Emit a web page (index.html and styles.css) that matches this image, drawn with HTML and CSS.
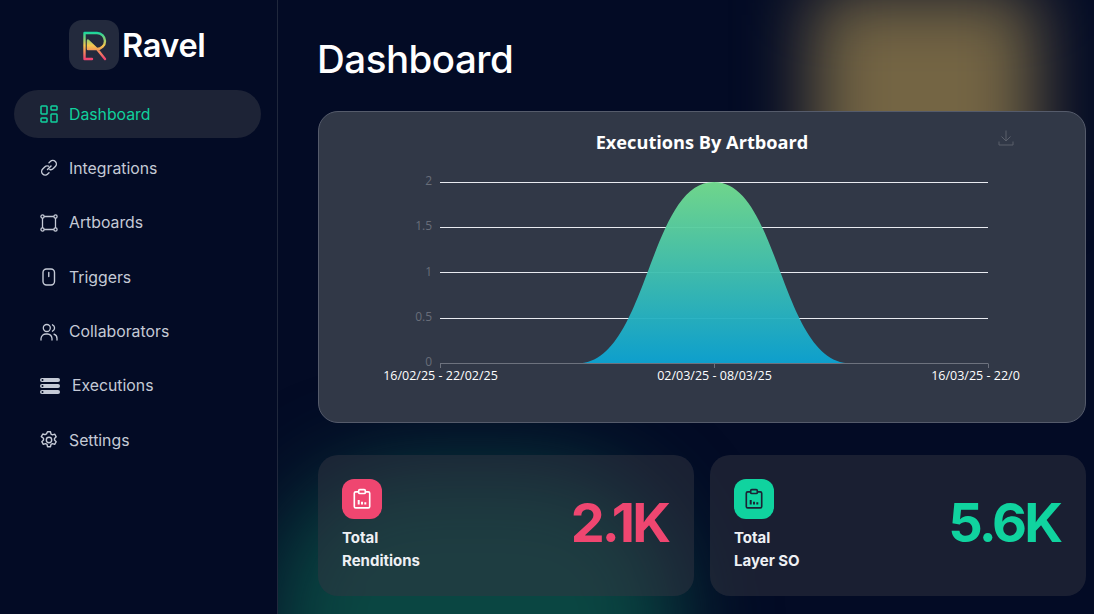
FILE: index.html
```html
<!DOCTYPE html>
<html lang="en">
<head>
<meta charset="utf-8">
<title>Ravel Dashboard</title>
<link rel="stylesheet" href="styles.css">
</head>
<body>
<div class="app">
  <aside class="sidebar">
    <div class="brand">
      <span class="logo">
        <svg width="34" height="34" viewBox="0 0 34 34" fill="none">
          <defs>
            <linearGradient id="lg" gradientUnits="userSpaceOnUse" x1="0" y1="4" x2="0" y2="31">
              <stop offset="0" stop-color="#12d6a0"/><stop offset=".5" stop-color="#f5c74e"/><stop offset="1" stop-color="#ef4370"/>
            </linearGradient>
          </defs>
          <path d="M11 12.500V21h9z" fill="url(#lg)"/>
          <path d="M15 31H7.500V5H20a8 8 0 0 1 0 16H11V12.500l9 8.500 8 10" stroke="url(#lg)" stroke-width="2.400" stroke-linecap="round" stroke-linejoin="round"/>
        </svg>
      </span>
      <span class="brand-name">Ravel</span>
    </div>
    <nav class="nav">
      <a class="nav-item active">
        <svg class="ico" viewBox="0 0 18 18" fill="none" stroke="currentColor" stroke-width="1.500"><rect x="1" y="1" width="6" height="8" rx=".8"/><rect x="11" y="1" width="6" height="4" rx=".8"/><rect x="1" y="13" width="6" height="4" rx=".8"/><rect x="11" y="9" width="6" height="8" rx=".8"/></svg>
        <span>Dashboard</span>
      </a>
      <a class="nav-item">
        <svg class="ico" viewBox="0 0 18 18" fill="none" stroke="currentColor" stroke-width="1.400" stroke-linecap="round"><path d="M7.500 10.500l3.500-3.500"/><path d="M9 3.800l1.300-1.200a3.500 3.500 0 0 1 5 5l-2 2a3.500 3.500 0 0 1-3.500.9"/><path d="M8.500 7.200a3.500 3.500 0 0 0-3.800.8l-2 2a3.500 3.500 0 0 0 5 5l1.300-1.200"/></svg>
        <span>Integrations</span>
      </a>
      <a class="nav-item">
        <svg class="ico" viewBox="0 0 18 18" fill="none" stroke="currentColor" stroke-width="1.300"><circle cx="2.500" cy="2.500" r="1.600"/><circle cx="15.500" cy="2.500" r="1.600"/><circle cx="2.500" cy="15.500" r="1.600"/><circle cx="15.500" cy="15.500" r="1.600"/><path d="M4.100 2.500h9.800M4.100 15.500h9.800M2.500 4.100v9.800M15.500 4.100v9.800"/></svg>
        <span>Artboards</span>
      </a>
      <a class="nav-item">
        <svg class="ico" viewBox="0 0 18 18" fill="none" stroke="currentColor" stroke-width="1.400" stroke-linecap="round"><rect x="3" y="1" width="11.500" height="16" rx="3.500"/><path d="M8.750 4.500v4"/></svg>
        <span>Triggers</span>
      </a>
      <a class="nav-item">
        <svg class="ico" viewBox="0 0 18 18" fill="none" stroke="currentColor" stroke-width="1.300" stroke-linecap="round"><circle cx="6.800" cy="5" r="3.500"/><path d="M1 17v-1.500a5 5 0 0 1 5-4.500h1.500a5 5 0 0 1 4.500 4.500V17"/><path d="M12.500 1.800a3.500 3.500 0 0 1 0 6.400M14 11.200a4.500 4.500 0 0 1 3 4.300V17"/></svg>
        <span>Collaborators</span>
      </a>
      <a class="nav-item exec">
        <svg class="ico wide" viewBox="0 0 20 18" fill="currentColor"><rect x="0" y="1" width="20" height="4" rx="2"/><rect x="0" y="7" width="20" height="4" rx="2"/><rect x="0" y="13" width="20" height="4" rx="2"/><circle cx="2.500" cy="3" r="1" fill="#030b25"/><circle cx="2.500" cy="9" r="1" fill="#030b25"/><circle cx="2.500" cy="15" r="1" fill="#030b25"/></svg>
        <span>Executions</span>
      </a>
      <a class="nav-item">
        <svg class="ico" viewBox="0 0 18 18" fill="none" stroke="currentColor" stroke-width="1.400" stroke-linejoin="round"><circle cx="9" cy="9" r="2.700"/><path d="M7.500 .8h3l.5 2.300 1.500.8 2.200-.7 1.500 2.600-1.700 1.600v1.700l1.700 1.600-1.500 2.600-2.200-.7-1.500.8-.5 2.300h-3l-.5-2.300-1.500-.8-2.200.7-1.500-2.600 1.700-1.600V7.200L1.300 5.600l1.500-2.600 2.200.7 1.500-.8z"/></svg>
        <span>Settings</span>
      </a>
    </nav>
  </aside>

  <main class="main">
    <h1 class="title">Dashboard</h1>

    <section class="chart-card">
      <svg class="chart" width="702" height="312" viewBox="318 111 702 312">
        <defs>
          <linearGradient id="area" x1="0" y1="0" x2="0" y2="1">
            <stop offset="0" stop-color="#72dc8e"/><stop offset="1" stop-color="#0ca3d2"/>
          </linearGradient>
        </defs>
        <text class="chart-title" x="702" y="149" text-anchor="middle">Executions By Artboard</text>
        <path class="grid" d="M440 182.500H988M440 227.500H988M440 272.500H988M440 318.500H988"/>
        <path d="M577 363.500C648 363.500 648 182 714 182C780 182 780 363.500 851 363.500Z" fill="url(#area)" opacity=".96"/>
        <path class="axis" d="M440 363.500H988M440.500 363.500V368M714.500 363.500V368M988.500 363.500V368"/>
        <g class="y-label" text-anchor="end">
          <text x="432" y="185">2</text>
          <text x="432" y="230">1.5</text>
          <text x="432" y="276">1</text>
          <text x="432" y="321">0.5</text>
          <text x="432" y="366">0</text>
        </g>
        <g class="x-label" text-anchor="middle">
          <text x="440.500" y="380">16/02/25 - 22/02/25</text>
          <text x="714.500" y="380">02/03/25 - 08/03/25</text>
          <text x="988.500" y="380">16/03/25 - 22/03/25</text>
        </g>
      </svg>
      <svg class="download" width="16" height="16" viewBox="0 0 16 16" fill="none" stroke="#5a5f6b" stroke-width="1"><path d="M8 0.500v10M3.500 6.500L8 11l4.500-4.500M1 11.500v3.500h14v-3.500"/></svg>
    </section>

    <section class="stats">
      <article class="stat">
        <div class="stat-info">
          <span class="stat-ico pink">
            <svg width="22" height="22" viewBox="0 0 20 20" fill="none" stroke="#fff" stroke-width="1.500"><path d="M6.500 3.500H4.300A1.300 1.300 0 0 0 3 4.800v12a1.300 1.300 0 0 0 1.300 1.300h11.400a1.300 1.300 0 0 0 1.300-1.300v-12a1.300 1.300 0 0 0-1.300-1.300h-2.200"/><rect x="7" y="1.500" width="6" height="3.500" rx="1"/><path stroke-width="1.800" d="M7 15v-4M10 15v-2.500M13 15v-2"/></svg>
          </span>
          <p class="stat-label">Total<br>Renditions</p>
        </div>
        <span class="stat-num pink-text">2.1K</span>
      </article>
      <article class="stat">
        <div class="stat-info">
          <span class="stat-ico green">
            <svg width="22" height="22" viewBox="0 0 20 20" fill="none" stroke="#1b2235" stroke-width="1.500"><path d="M6.500 3.500H4.300A1.300 1.300 0 0 0 3 4.800v12a1.300 1.300 0 0 0 1.300 1.300h11.400a1.300 1.300 0 0 0 1.300-1.300v-12a1.300 1.300 0 0 0-1.300-1.300h-2.200"/><rect x="7" y="1.500" width="6" height="3.500" rx="1"/><path stroke-width="1.800" d="M7 15v-4M10 15v-2.500M13 15v-2"/></svg>
          </span>
          <p class="stat-label">Total<br>Layer SO</p>
        </div>
        <span class="stat-num green-text">5.6K</span>
      </article>
    </section>
  </main>
</div>
</body>
</html>
```

FILE: styles.css
```css
* { box-sizing: border-box; }
html, body { margin: 0; height: 100%; overflow: hidden; }
body { background: #030b25; font-family: "Inter", "Liberation Sans", sans-serif; color: #fff; }
.app { display: flex; height: 614px; width: 1094px; }
.sidebar { width: 278px; flex: none; border-right: 1px solid #20283c; background: #030b25; padding: 20px 16px 0 14px; }
.brand { display: flex; align-items: center; gap: 3px; margin-left: 55px; height: 50px; }
.logo { width: 50px; height: 50px; border-radius: 13px; background: #232a3d; display: flex; align-items: center; justify-content: center; }
.brand-name { font-size: 32.500px; font-weight: 600; letter-spacing: -0.4px; }
.nav { margin-top: 20px; display: flex; flex-direction: column; gap: 6.400px; }
.nav-item { height: 48px; border-radius: 24px; display: flex; align-items: center; gap: 11px; padding-left: 26px; font-size: 15.800px; color: #c5cad6; }
.nav-item.active { background: #1d2336; color: #10d19d; }
.nav-item.exec { gap: 12px; }
.ico { width: 18px; height: 18px; flex: none; }
.ico.wide { width: 20px; }
.main { position: relative; overflow: hidden; flex: 1; min-width: 0; padding: 0 8px 0 40px; }
.main::before, .main::after { content: ""; position: absolute; }
.main::before { left: 534px; top: -8px; width: 225px; height: 200px; background: #746544; filter: blur(35px); }
.main::after { left: -10px; top: 468px; width: 410px; height: 320px; border-radius: 140px; background: #0a4642; filter: blur(45px); }
.main > * { position: relative; z-index: 1; }
.title { margin: 0 0 0 -1px; height: 111px; padding-top: 36px; font-size: 38.500px; line-height: 46px; font-weight: 500; letter-spacing: -0.500px; }
.chart-card { position: relative; height: 312px; border-radius: 20px; border: 1px solid #555b6b; background: #313847; overflow: hidden; }
.chart { display: block; margin: -1px; }
.chart-title { font-family: "Open Sans", sans-serif; font-size: 18.200px; font-weight: 700; fill: #fff; }
.grid { stroke: #e8eaf0; stroke-width: 1; fill: none; }
.axis { stroke: #6d727e; stroke-width: 1; fill: none; }
.y-label text { font-family: "Open Sans", sans-serif; font-size: 12px; fill: #686d79; }
.x-label text { font-family: "Open Sans", sans-serif; font-size: 12.500px; font-weight: 500; fill: #fff; }
.download { position: absolute; left: 679px; top: 18px; }
.stats { margin-top: 32px; display: flex; gap: 16px; }
.stat { flex: 1; height: 141px; border-radius: 20px; background: rgba(52,54,66,0.49); padding: 24px 24px 0; display: flex; justify-content: space-between; }
.stat-ico { width: 40px; height: 40px; border-radius: 12px; display: flex; align-items: center; justify-content: center; }
.pink { background: #ef4670; }
.green { background: #10d39f; }
.stat-label { margin: 7px 0 0; font-size: 15px; line-height: 23px; font-weight: 700; color: #eef0f4; }
.stat-num { font-size: 54px; font-weight: 700; letter-spacing: -3px; line-height: 60px; margin: 14px 2px 0 0; }
.pink-text { color: #ef4670; }
.green-text { color: #10d39f; }
```
